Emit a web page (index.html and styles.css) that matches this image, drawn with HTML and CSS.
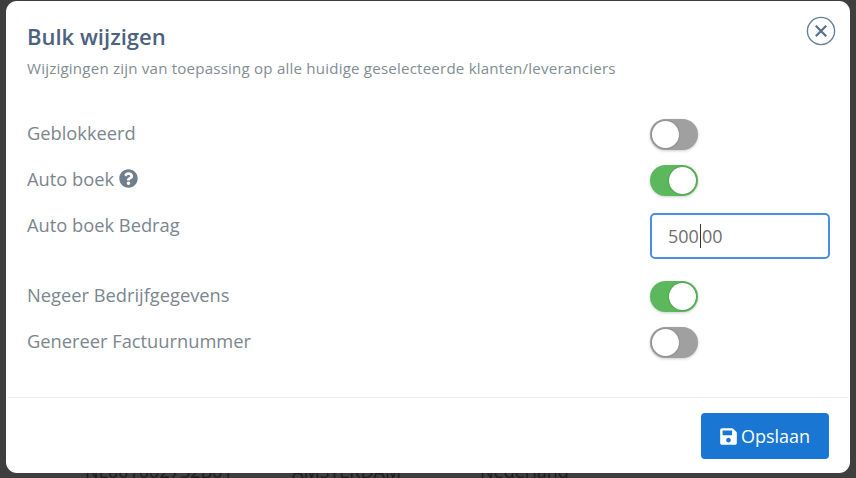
FILE: index.html
```html
<!DOCTYPE html>
<html lang="en">
<head>
    <meta charset="UTF-8">
    <meta name="viewport" content="width=device-width, initial-scale=1.0">
    <title>Bulk wijzigen</title>
    <link rel="stylesheet" href="styles.css">
</head>
<body>
    <!-- table behind the modal, only the bottom edge shows -->
    <div class="backdrop-row">
        <span class="cell-vat">NL001002752B01</span>
        <span class="cell-city">AMSTERDAM</span>
        <span class="cell-country">Nederland</span>
    </div>

    <div class="modal">
        <div class="modal-header">
            <div>
                <h2>Bulk wijzigen</h2>
                <p class="subtitle">Wijzigingen zijn van toepassing op alle huidige geselecteerde klanten/leveranciers</p>
            </div>
            <button class="close" type="button" aria-label="Sluiten">
                <svg viewBox="0 0 30 30" width="30" height="30">
                    <circle cx="15" cy="15" r="13.6" fill="none" stroke="#6a8099" stroke-width="1.4"/>
                    <path d="M9.8 9.8l10.4 10.4M20.2 9.8L9.8 20.2" fill="none" stroke="#566f8c" stroke-width="2.2"/>
                </svg>
            </button>
        </div>

        <div class="modal-body">
            <div class="form-row">
                <label>Geblokkeerd</label>
                <div class="toggle"></div>
            </div>
            <div class="form-row">
                <label>Auto boek
                    <svg class="help" viewBox="0 0 512 512" width="19" height="19"><path d="M504 256c0 136.997-111.043 248-248 248S8 392.997 8 256C8 119.083 119.043 8 256 8s248 111.083 248 248zM262.655 90c-54.497 0-89.255 22.957-116.549 63.758-3.536 5.286-2.353 12.415 2.715 16.258l34.699 26.31c5.205 3.947 12.621 3.008 16.665-2.122 17.864-22.658 30.113-35.797 57.303-35.797 20.429 0 45.698 13.148 45.698 32.958 0 14.976-12.363 22.667-32.534 33.976C247.128 238.528 216 254.941 216 296v4c0 6.627 5.373 12 12 12h56c6.627 0 12-5.373 12-12v-1.333c0-28.462 83.186-29.647 83.186-106.667 0-58.002-60.165-102-116.531-102zM256 338c-25.365 0-46 20.635-46 46 0 25.364 20.635 46 46 46s46-20.636 46-46c0-25.365-20.635-46-46-46z"/></svg>
                </label>
                <div class="toggle on"></div>
            </div>
            <div class="form-row amount-row">
                <label>Auto boek Bedrag</label>
                <div class="input">500<span class="caret"></span>00</div>
            </div>
            <div class="form-row">
                <label>Negeer Bedrijfgegevens</label>
                <div class="toggle on"></div>
            </div>
            <div class="form-row">
                <label>Genereer Factuurnummer</label>
                <div class="toggle"></div>
            </div>
        </div>

        <div class="modal-footer">
            <button class="save" type="button">
                <svg viewBox="0 0 448 512" width="17" height="19"><path d="M433.941 129.941l-83.882-83.882A48 48 0 0 0 316.118 32H48C21.49 32 0 53.49 0 80v352c0 26.51 21.49 48 48 48h352c26.51 0 48-21.49 48-48V163.882a48 48 0 0 0-14.059-33.941zM224 416c-35.346 0-64-28.654-64-64 0-35.346 28.654-64 64-64s64 28.654 64 64c0 35.346-28.654 64-64 64zm96-304.52V212c0 6.627-5.373 12-12 12H76c-6.627 0-12-5.373-12-12V108c0-6.627 5.373-12 12-12h228.52c3.183 0 6.235 1.264 8.485 3.515l3.48 3.48A11.996 11.996 0 0 1 320 111.48z"/></svg>
                Opslaan
            </button>
        </div>
    </div>
</body>
</html>
```

FILE: styles.css
```css
/* General styling */
html, body {
    height: 100%;
}

body {
    font-family: 'Open Sans', 'Noto Sans', sans-serif;
    margin: 0;
    padding: 1px 6px 0;
    box-sizing: border-box;
    overflow: hidden;
    background-color: #3e3e3e;
}

/* Table text peeking out under the modal */
.backdrop-row {
    position: absolute;
    left: 0;
    top: 459px;
    width: 100%;
    font-size: 18px;
    line-height: 24px;
    color: #1c1c1c;
}

.backdrop-row span {
    position: absolute;
    top: 0;
}

.cell-vat { left: 85px; }
.cell-city { left: 292px; }
.cell-country { left: 480px; }

/* Modal */
.modal {
    position: relative;
    height: 472px;
    background: #fff;
    border-radius: 11px;
    display: flex;
    flex-direction: column;
}

.modal-header {
    display: flex;
    justify-content: space-between;
    align-items: flex-start;
    padding: 21px 14px 0 21px;
    height: 110px;
    box-sizing: border-box;
}

h2 {
    font-size: 22px;
    line-height: 28px;
    font-weight: 600;
    margin: 0;
    color: #4c6280;
}

.subtitle {
    font-size: 15.1px;
    line-height: 20px;
    letter-spacing: 0.2px;
    margin: 8px 0 0;
    color: #828d94;
}

.close {
    padding: 0;
    border: none;
    background: none;
    display: flex;
    margin-top: -6px;
}

.modal-body {
    flex: 1;
    padding: 0 20px 0 21px;
}

.form-row {
    display: flex;
    justify-content: space-between;
    align-items: center;
    height: 46.5px;
}

.form-row label {
    font-size: 18.3px;
    color: #7b868e;
    display: flex;
    align-items: center;
    gap: 5px;
    margin-top: -4px;
}

.help {
    fill: #6f7f8d;
}

.amount-row {
    height: 69px;
    align-items: flex-start;
    padding-top: 9px;
    box-sizing: border-box;
}

.amount-row label {
    margin-top: 0;
    line-height: 24px;
}

/* Switches */
.toggle {
    width: 48px;
    height: 31px;
    margin-right: 132px;
    border-radius: 16px;
    background: #a0a0a0;
    box-shadow: 0 1px 3px rgba(0, 0, 0, 0.2);
    display: flex;
    align-items: center;
    padding: 0 2px;
    box-sizing: border-box;
}

.toggle::before {
    content: "";
    width: 27px;
    height: 27px;
    border-radius: 50%;
    background: #fff;
    box-shadow: 0 0 2px rgba(0, 0, 0, 0.3);
}

.toggle.on {
    background: #5cb85c;
    justify-content: flex-end;
}

.input {
    width: 180px;
    height: 46px;
    box-sizing: border-box;
    border: 2px solid #4a90dc;
    border-radius: 5px;
    padding: 0 16px;
    display: flex;
    align-items: center;
    font-size: 18px;
    color: #6f6f6f;
}

.caret {
    width: 1px;
    height: 24px;
    margin: 0 1px;
    background: #333;
}

/* Footer */
.modal-footer {
    margin: 0 2px;
    border-top: 1px solid #ececec;
    padding: 15px 19px 14px 0;
    display: flex;
    justify-content: flex-end;
}

.save {
    width: 128px;
    height: 46px;
    border: none;
    border-radius: 4px;
    background-color: #1976d2;
    color: #fff;
    font-family: inherit;
    font-size: 18px;
    font-weight: 500;
    display: flex;
    align-items: center;
    justify-content: center;
    gap: 4px;
}

.save svg {
    fill: #fff;
}
```
